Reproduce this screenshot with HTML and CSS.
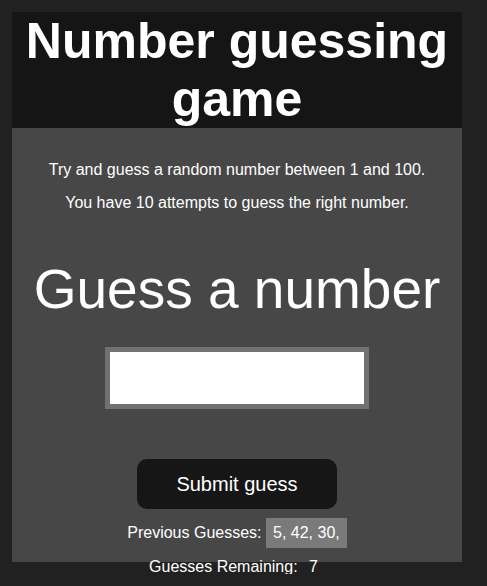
FILE: index.html
```html
<!DOCTYPE html>
<html lang="en">
<head>
<meta charset="utf-8">
<title>Number guessing game</title>
<link rel="stylesheet" href="styles.css">
</head>
<body>
<main class="game">
  <header class="game-header">
    <h1 class="title">Number guessing game</h1>
  </header>
  <section class="game-body">
    <p class="intro">Try and guess a random number between 1 and 100.</p>
    <p class="intro intro-second">You have 10 attempts to guess the right number.</p>
    <h2 class="prompt">Guess a number</h2>
    <input class="guess-field" type="text" inputmode="numeric" aria-label="Guess">
    <button class="guess-submit" type="button">Submit guess</button>
    <p class="stat">Previous Guesses: <span class="stat-value stat-guesses">5, 42, 30,</span></p>
    <p class="stat stat-remaining">Guesses Remaining: <span class="stat-value">7</span></p>
  </section>
</main>
</body>
</html>
```
FILE: styles.css
```css
html, body {
  margin: 0;
  padding: 0;
}

body {
  background: #212121;
  color: #ffffff;
  font-family: "Liberation Sans", Arial, sans-serif;
}

.game {
  width: 450px;
  height: 550px;
  margin: 12px;
  background: #474747;
  text-align: center;
}

.game-header {
  background: #151515;
}

.title {
  margin: 0;
  font-size: 50px;
  line-height: 58px;
  font-weight: bold;
}

.game-body {
  padding-top: 33px;
}

.intro {
  margin: 0;
  font-size: 16px;
  line-height: 18px;
}

.intro-second {
  margin-top: 15px;
}

.prompt {
  margin: 46px 0 0;
  font-size: 55px;
  line-height: 62px;
  font-weight: normal;
}

.guess-field {
  display: block;
  box-sizing: border-box;
  width: 264px;
  height: 62px;
  margin: 27px auto 0;
  padding: 0 8px;
  border: 5px solid #717171;
  border-radius: 0;
  background: #ffffff;
  font-family: inherit;
  font-size: 20px;
  outline: none;
}

.guess-submit {
  display: block;
  width: 200px;
  height: 50px;
  margin: 50px auto 0;
  padding: 0;
  border: none;
  border-radius: 10px;
  background: #161616;
  color: #ffffff;
  font-family: inherit;
  font-size: 20px;
}

.stat {
  margin: 9px 0 0;
  font-size: 16px;
  line-height: 18px;
}

.stat-remaining {
  margin-top: 4px;
}

.stat-value {
  display: inline-block;
  padding: 6px 7px;
}

.stat-guesses {
  background: #7a7a7a;
}
```
